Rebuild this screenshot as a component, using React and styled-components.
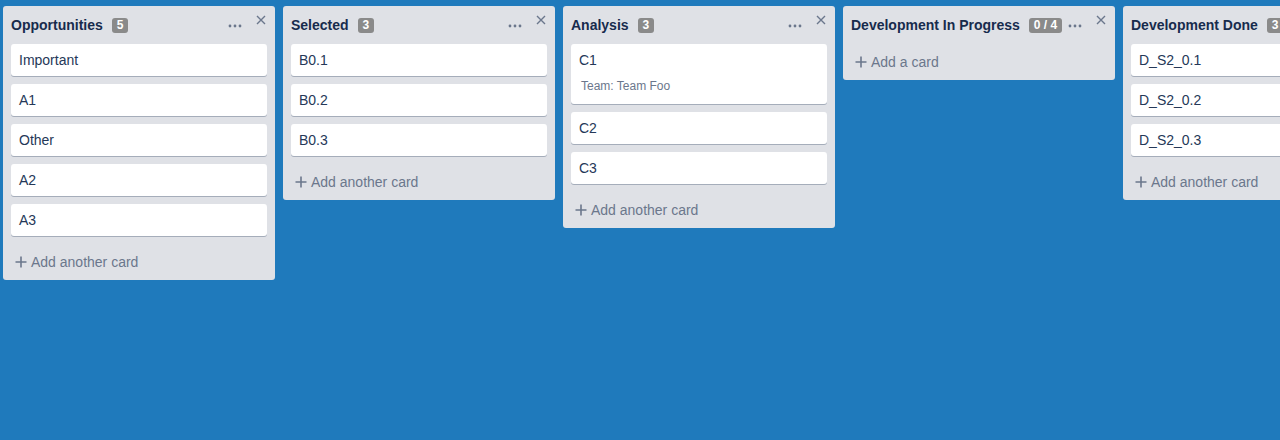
import React from 'react';
import styled, { createGlobalStyle } from 'styled-components';

const GlobalStyle = createGlobalStyle`
  html, body {
    margin: 0;
    padding: 0;
    overflow: hidden;
  }
  body {
    font-family: 'Liberation Sans', Arial, sans-serif;
    background: #1f7abc;
  }
`;

const Board = styled.div`
  display: flex;
  align-items: flex-start;
  gap: 8px;
  height: 440px;
  box-sizing: border-box;
  padding: 6px 0 0 3px;
  background: #1f7abc;
  overflow: hidden;
`;

const Column = styled.div`
  flex: 0 0 272px;
  width: 272px;
  background: #dfe1e6;
  border-radius: 3px;
  box-sizing: border-box;
  padding: 0 8px;
  display: flex;
  flex-direction: column;
`;

const Header = styled.div`
  display: flex;
  align-items: center;
  height: 38px;
  padding: 0 1px 0 0;
  color: #172b4d;
`;

const Title = styled.span`
  font-size: 14px;
  font-weight: bold;
  line-height: 18px;
  white-space: nowrap;
`;

const Badge = styled.span`
  margin-left: 9px;
  background: #8a8a8a;
  color: #fff;
  font-size: 12px;
  font-weight: bold;
  line-height: 15px;
  height: 15px;
  padding: 0 5px;
  border-radius: 3px;
  white-space: nowrap;
`;

const Dots = styled.svg`
  margin-left: auto;
  margin-top: 2px;
  flex: 0 0 auto;
`;

const Close = styled.svg`
  align-self: flex-start;
  margin: 9px 0 0 14px;
  flex: 0 0 auto;
`;

const Card = styled.div`
  background: #fff;
  border-radius: 3px;
  box-shadow: 0 1px 0 #a5adba;
  padding: 6px 8px;
  margin-bottom: 8px;
  color: #253858;
  font-size: 14px;
  line-height: 20px;
`;

const CardMeta = styled.div`
  margin: 8px 0 4px 2px;
  font-size: 12px;
  line-height: 16px;
  color: #6b778c;
`;

const AddCard = styled.div`
  display: flex;
  align-items: center;
  height: 36px;
  padding-left: 4px;
  color: #6b778c;
  font-size: 14px;
  gap: 4px;
`;

const columns = [
  {
    title: 'Opportunities',
    badge: '5',
    cards: [{ title: 'Important' }, { title: 'A1' }, { title: 'Other' }, { title: 'A2' }, { title: 'A3' }],
  },
  {
    title: 'Selected',
    badge: '3',
    cards: [{ title: 'B0.1' }, { title: 'B0.2' }, { title: 'B0.3' }],
  },
  {
    title: 'Analysis',
    badge: '3',
    cards: [{ title: 'C1', meta: 'Team: Team Foo' }, { title: 'C2' }, { title: 'C3' }],
  },
  {
    title: 'Development In Progress',
    badge: '0 / 4',
    cards: [],
  },
  {
    title: 'Development Done',
    badge: '3',
    cards: [{ title: 'D_S2_0.1' }, { title: 'D_S2_0.2' }, { title: 'D_S2_0.3' }],
  },
];

function Lane({ lane }) {
  return (
    <Column>
      <Header>
        <Title>{lane.title}</Title>
        <Badge>{lane.badge}</Badge>
        <Dots width="14" height="4" viewBox="0 0 14 4">
          <circle cx="2" cy="2" r="1.4" fill="#6b778c" />
          <circle cx="7" cy="2" r="1.4" fill="#6b778c" />
          <circle cx="12" cy="2" r="1.4" fill="#6b778c" />
        </Dots>
        <Close width="10" height="10" viewBox="0 0 10 10">
          <path d="M1 1 L9 9 M9 1 L1 9" stroke="#6b778c" strokeWidth="1.4" fill="none" />
        </Close>
      </Header>
      {lane.cards.map((c) => (
        <Card key={c.title}>
          {c.title}
          {c.meta && <CardMeta>{c.meta}</CardMeta>}
        </Card>
      ))}
      <AddCard>
        <svg width="12" height="12" viewBox="0 0 12 12">
          <path d="M6 0.5 V11.5 M0.5 6 H11.5" stroke="#6b778c" strokeWidth="1.6" fill="none" />
        </svg>
        {lane.cards.length ? 'Add another card' : 'Add a card'}
      </AddCard>
    </Column>
  );
}

export default function App() {
  return (
    <>
      <GlobalStyle />
      <Board>
        {columns.map((lane) => (
          <Lane key={lane.title} lane={lane} />
        ))}
      </Board>
    </>
  );
}
